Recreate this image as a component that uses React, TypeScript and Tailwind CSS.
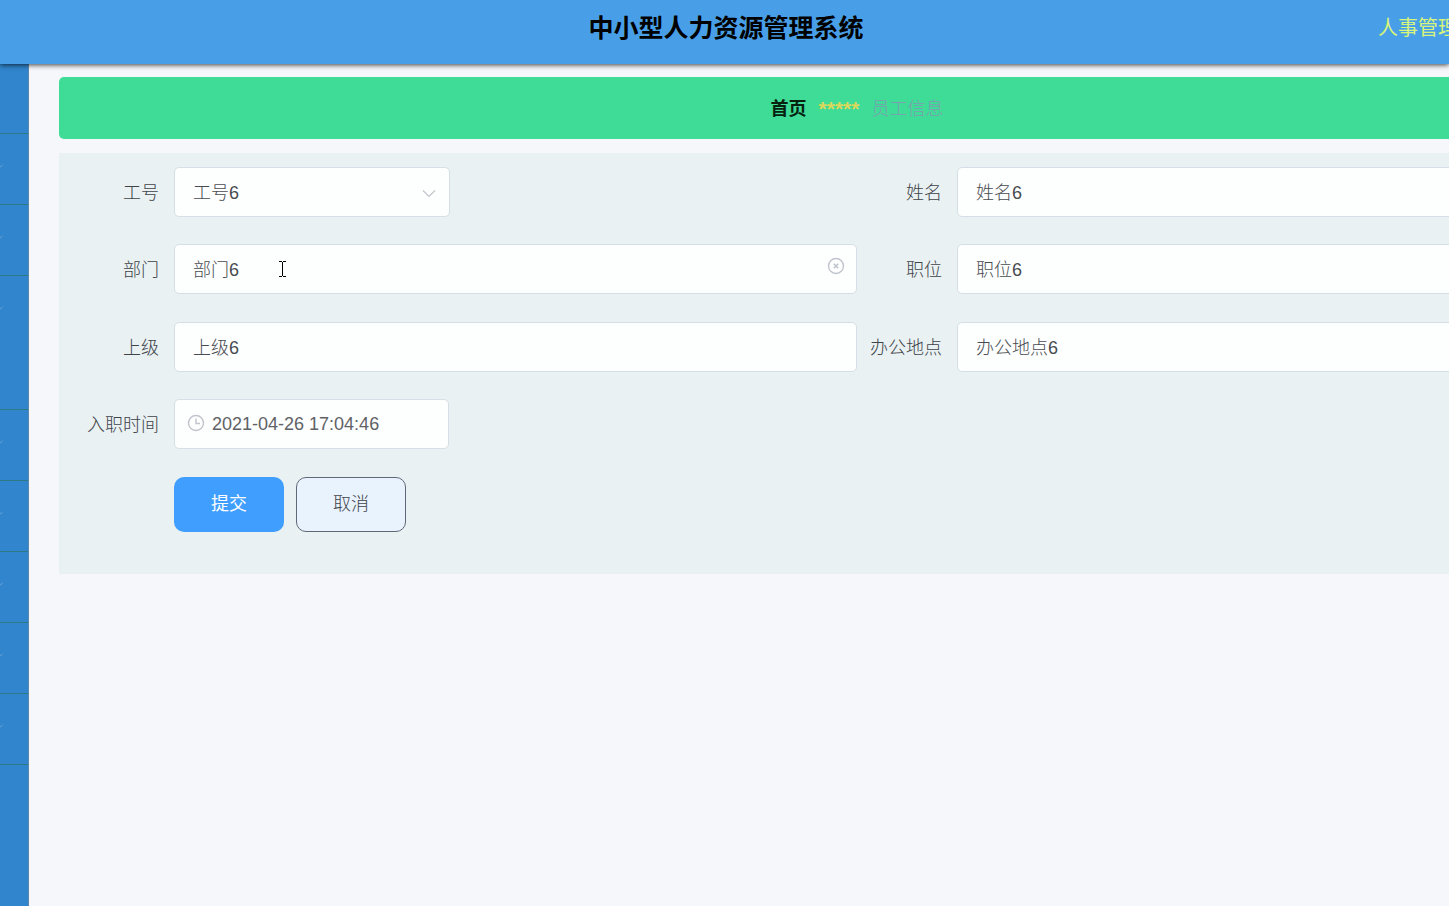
import type { ReactNode } from 'react';
import { useState } from 'react';

const initial = {
  code: '工号6',
  name: '姓名6',
  department: '部门6',
  position: '职位6',
  manager: '上级6',
  office: '办公地点6',
  hiredAt: '2021-04-26 17:04:46',
};

const control =
  'h-[50px] rounded-[5px] border border-[#d5dfe5] bg-[#fdfefe] px-[18px] text-[18px] outline-none';
const textControl = `${control} w-full pb-[2px] font-light text-[#484b50]`;

function Field({ id, label, children }: { id: string; label: string; children: ReactNode }) {
  return (
    <div className="flex">
      <label
        htmlFor={id}
        className="h-[50px] w-[100px] shrink-0 whitespace-nowrap pr-[15px] text-right text-[18px] font-light leading-[52px] text-[#404348]"
      >
        {label}
      </label>
      <div className="relative flex min-w-0 flex-1">{children}</div>
    </div>
  );
}

function Sidebar() {
  const items = [
    { height: 'h-[70px]', arrow: false },
    { height: 'h-[71px]', arrow: true },
    { height: 'h-[71px]', arrow: true },
    { height: 'h-[134px]', arrow: true },
    { height: 'h-[71px]', arrow: true },
    { height: 'h-[71px]', arrow: true },
    { height: 'h-[71px]', arrow: true },
    { height: 'h-[71px]', arrow: true },
    { height: 'h-[71px]', arrow: true },
  ];
  return (
    <aside className="w-[29px] shrink-0 border-r border-[#5b87ac] bg-[#3185cd]">
      {items.map((item, i) => (
        <div key={i} className={`${item.height} border-b border-[#2c7a84] pt-[30px]`}>
          {item.arrow && (
            <svg className="h-[5px] w-[4px]" viewBox="0 0 4 5" fill="none" stroke="#6ba3d6">
              <path d="M-1 4 L2.5 1" />
            </svg>
          )}
        </div>
      ))}
    </aside>
  );
}

export default function App() {
  const [form, setForm] = useState(initial);
  const bind = (key: keyof typeof initial) => ({
    id: key,
    value: form[key],
    onChange: (e: { target: { value: string } }) => setForm({ ...form, [key]: e.target.value }),
  });

  return (
    <div className="flex min-h-screen flex-col overflow-hidden bg-[#f5f7fa] font-['Liberation_Sans','Noto_Sans_CJK_SC',sans-serif]">
      <header className="z-10 flex h-16 bg-[#489fe8] pl-[74px] leading-[56px] shadow-[0_1px_5px_rgba(0,0,0,0.75)]">
        <h1 className="flex-1 text-center text-[25px] font-bold text-black">中小型人力资源管理系统</h1>
        <a href="#account" className="w-[71px] overflow-hidden whitespace-nowrap text-[20px] text-[#d6f37c]">
          人事管理
        </a>
      </header>

      <div className="flex flex-1">
        <Sidebar />
        <main className="w-0 flex-1 pl-[30px] pt-[13px]">
          <div className="min-w-[1596px]">
            <nav className="flex h-[62px] items-center justify-center gap-3 rounded-[5px] bg-[#3edc97] pt-[2px] text-[18px]">
              <a href="#home" className="font-bold text-[#06220f]">首页</a>
              <span className="text-[21px] font-bold text-[#d9d85c]">*****</span>
              <span className="font-light text-[#7f9fb0]">员工信息</span>
            </nav>

            <form
              className="mt-[14px] grid grid-cols-2 grid-rows-[50px_51px_50px_51px_55px] items-start gap-y-[27px] bg-[#e9f1f3] px-[15px] pb-[42px] pt-[14px]"
              onSubmit={(e) => e.preventDefault()}
            >
              <Field id="code" label="工号">
                <select
                  {...bind('code')}
                  className={`${control} w-[276px] appearance-none pt-[2px] font-light text-[#484b50]`}
                >
                  <option>工号6</option>
                </select>
                <svg
                  className="pointer-events-none absolute left-[247px] top-[18px] size-4"
                  viewBox="0 0 16 16"
                  fill="none"
                  stroke="#c0c4cc"
                  strokeWidth="1.2"
                >
                  <path d="M2 5.5 L8 11.5 L14 5.5" />
                </svg>
              </Field>
              <Field id="name" label="姓名">
                <input {...bind('name')} className={textControl} />
              </Field>

              <Field id="department" label="部门">
                <input {...bind('department')} className={textControl} />
                <svg
                  className="pointer-events-none absolute left-[105px] top-[17px] h-4 w-[7px]"
                  viewBox="0 0 7 16"
                  fill="none"
                  stroke="#000"
                >
                  <path d="M0 0.5 H3 M4 0.5 H7 M3.5 1 V15 M0 15.5 H3 M4 15.5 H7" />
                </svg>
                <button
                  type="button"
                  aria-label="清空"
                  onClick={() => setForm({ ...form, department: '' })}
                  className="absolute right-3 top-[13px]"
                >
                  <svg className="size-[18px]" viewBox="0 0 18 18" fill="none" stroke="#c0c4cc" strokeWidth="1.4">
                    <circle cx="9" cy="9" r="7.5" />
                    <path d="M6.8 6.8 L11.2 11.2 M11.2 6.8 L6.8 11.2" strokeWidth="1.6" />
                  </svg>
                </button>
              </Field>
              <Field id="position" label="职位">
                <input {...bind('position')} className={textControl} />
              </Field>

              <Field id="manager" label="上级">
                <input {...bind('manager')} className={textControl} />
              </Field>
              <Field id="office" label="办公地点">
                <input {...bind('office')} className={textControl} />
              </Field>

              <Field id="hiredAt" label="入职时间">
                <div className="relative">
                  <input {...bind('hiredAt')} className={`${control} w-[275px] pl-[37px] text-[#606266]`} />
                  <svg
                    className="pointer-events-none absolute left-[13px] top-[15px] size-[18px]"
                    viewBox="0 0 18 18"
                    fill="none"
                    stroke="#c0c4cc"
                    strokeWidth="1.4"
                  >
                    <circle cx="9" cy="9" r="7.5" />
                    <path d="M9 4.5 V9.5 H13" />
                  </svg>
                </div>
              </Field>

              <div className="col-start-1 flex gap-3 pl-[100px] text-[18px]">
                <button type="submit" className="h-[55px] w-[110px] rounded-[10px] bg-[#409eff] text-white">
                  提交
                </button>
                <button
                  type="button"
                  onClick={() => setForm(initial)}
                  className="h-[55px] w-[110px] rounded-[10px] border border-[#606878] bg-[#e9f3fe] font-light text-[#404348]"
                >
                  取消
                </button>
              </div>
            </form>
          </div>
        </main>
      </div>
    </div>
  );
}
